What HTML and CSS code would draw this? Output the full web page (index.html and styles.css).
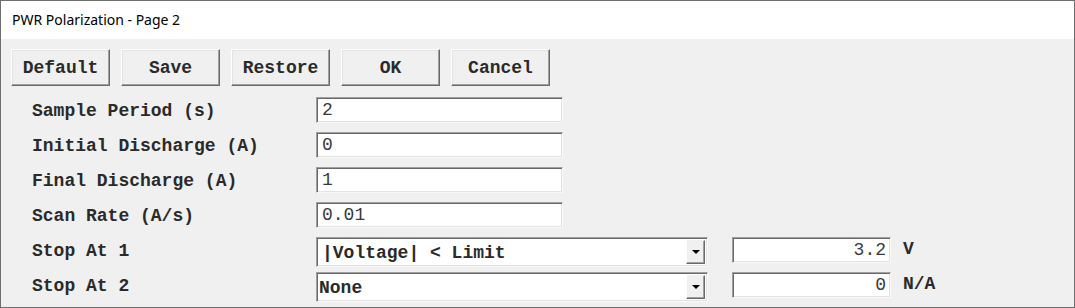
FILE: index.html
```html
<!DOCTYPE html>
<html>
<head lang="en">
    <meta charset="UTF-8">
    <title>PWR Polarization - Page 2</title>
    <link rel="stylesheet" href="styles.css">
</head>
<body>
    <div id="window">
        <div class="titlebar">PWR Polarization - Page 2</div>
        <div class="panel">
            <div class="toolbar">
                <div class="btn">Default</div>
                <div class="btn">Save</div>
                <div class="btn">Restore</div>
                <div class="btn">OK</div>
                <div class="btn">Cancel</div>
            </div>
            <div class="form">
                <div class="row">
                    <div class="label">Sample Period (s)</div>
                    <div class="field">2</div>
                </div>
                <div class="row">
                    <div class="label">Initial Discharge (A)</div>
                    <div class="field">0</div>
                </div>
                <div class="row">
                    <div class="label">Final Discharge (A)</div>
                    <div class="field">1</div>
                </div>
                <div class="row">
                    <div class="label">Scan Rate (A/s)</div>
                    <div class="field">0.01</div>
                </div>
                <div class="row">
                    <div class="label">Stop At 1</div>
                    <div class="combo">
                        <div class="combo-text">|Voltage| &lt; Limit</div>
                        <div class="combo-btn"><span class="arrow"></span></div>
                    </div>
                    <div class="field num">3.2</div>
                    <div class="unit">V</div>
                </div>
                <div class="row">
                    <div class="label">Stop At 2</div>
                    <div class="combo">
                        <div class="combo-text plain">None</div>
                        <div class="combo-btn"><span class="arrow"></span></div>
                    </div>
                    <div class="field num">0</div>
                    <div class="unit">N/A</div>
                </div>
            </div>
        </div>
    </div>
</body>
</html>
```

FILE: styles.css
```css
*{
    margin: 0;
    padding: 0;
    box-sizing: border-box;
}
body{
    background: #ffffff;
    font-family: "Courier New", "Liberation Mono", monospace;
}
#window{
    width: 1075px;
    height: 308px;
    border: 1px solid #6e6e6e;
    display: flex;
    flex-direction: column;
    overflow: hidden;
}
.titlebar{
    height: 38px;
    background: #ffffff;
    font-family: "Noto Sans", "Segoe UI", sans-serif;
    font-size: 14px;
    color: #000000;
    padding-left: 11px;
    line-height: 38px;
}
.panel{
    flex: 1;
    background: #f0f0f0;
    padding: 10px 0 0 10px;
}
.toolbar{
    display: flex;
    gap: 11px;
}
.btn{
    width: 99px;
    height: 37px;
    background: #f0f0f0;
    border: 1px solid;
    border-color: #ffffff #6a6a6a #6a6a6a #ffffff;
    box-shadow: inset -1px -1px 0 #a0a0a0, inset 1px 1px 0 #e3e3e3;
    font-size: 18px;
    font-weight: bold;
    color: #2a2a2a;
    text-align: center;
    line-height: 36px;
}
.form{
    padding: 11px 0 0 21px;
}
.row{
    display: flex;
    align-items: flex-start;
    height: 35px;
}
.label{
    width: 284px;
    height: 26px;
    line-height: 29px;
    font-size: 18px;
    font-weight: bold;
    color: #2a2a2a;
}
.field{
    width: 247px;
    height: 26px;
    background: #ffffff;
    border: 1px solid;
    border-color: #a0a0a0 #f8f8f8 #f8f8f8 #a0a0a0;
    box-shadow: inset 1px 1px 0 #696969, inset -1px -1px 0 #e3e3e3;
    padding: 0 5px;
    font-size: 18px;
    line-height: 25px;
    color: #3a3a3a;
}
.combo{
    width: 392px;
    height: 30px;
    display: flex;
    background: #ffffff;
    border: 1px solid;
    border-color: #a0a0a0 #f8f8f8 #f8f8f8 #a0a0a0;
    box-shadow: inset 1px 1px 0 #696969, inset -1px -1px 0 #e3e3e3;
    padding: 2px 2px 2px 2px;
    margin-right: 24px;
}
.combo-text{
    flex: 1;
    padding-left: 3px;
    font-size: 18px;
    font-weight: bold;
    line-height: 27px;
    color: #2a2a2a;
}
.combo-text.plain{
    padding-left: 0;
}
.combo-btn{
    width: 19px;
    height: 24px;
    background: #f0f0f0;
    border: 1px solid;
    border-color: #f0f0f0 #6a6a6a #6a6a6a #ffffff;
    box-shadow: inset -1px -1px 0 #a0a0a0;
    display: flex;
    align-items: center;
    justify-content: center;
}
.arrow{
    width: 0;
    height: 0;
    border-left: 4px solid transparent;
    border-right: 4px solid transparent;
    border-top: 4px solid #000000;
}
.field.num{
    width: 159px;
    text-align: right;
    padding-right: 4px;
}
.unit{
    margin-left: 12px;
    height: 26px;
    line-height: 24px;
    font-size: 18px;
    font-weight: bold;
    color: #2a2a2a;
}
```
